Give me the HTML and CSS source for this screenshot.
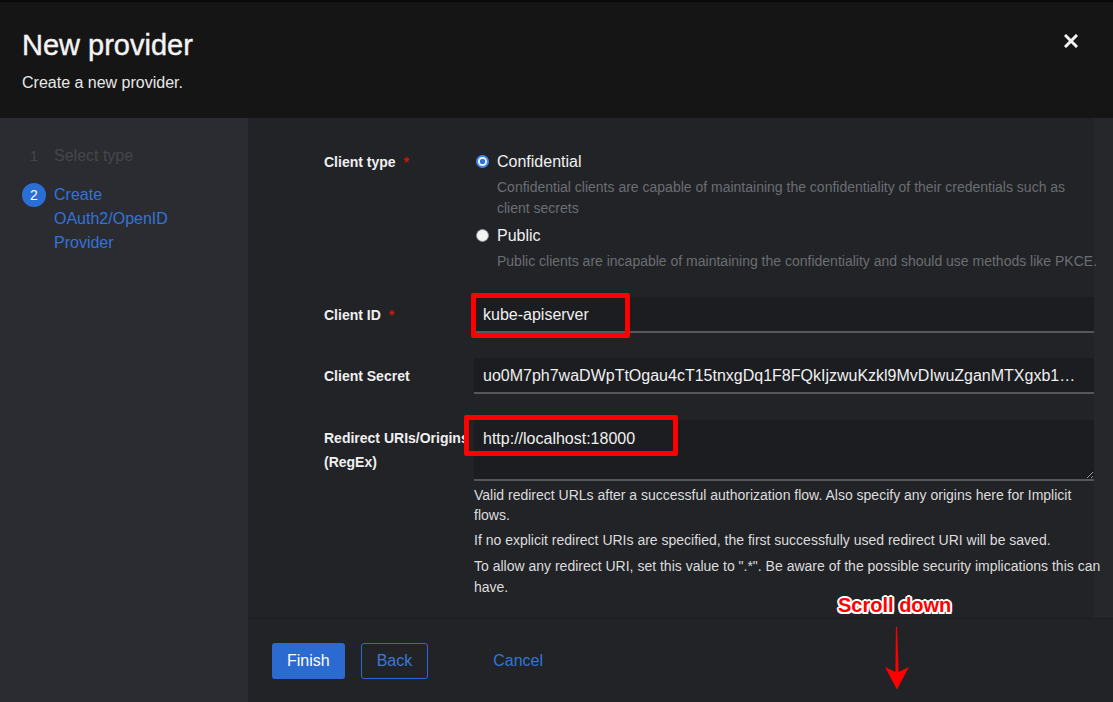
FILE: index.html
```html
<!DOCTYPE html>
<html lang="en">
<head>
<meta charset="utf-8">
<title>New provider</title>
<link rel="stylesheet" href="styles.css">
</head>
<body>
<div class="modal">
  <header class="modal-header">
    <div class="titles">
      <h1 class="title">New provider</h1>
      <p class="subtitle">Create a new provider.</p>
    </div>
    <button class="close" type="button" aria-label="Close">
      <svg viewBox="0 0 14 14" width="14" height="14"><path d="M2 2 L12 12 M12 2 L2 12" stroke="#f2f2f2" stroke-width="3" stroke-linecap="square" fill="none"/></svg>
    </button>
  </header>
  <div class="wizard">
    <nav class="wizard-nav">
      <ol class="steps">
        <li class="step"><span class="step-num">1</span><span class="step-text">Select type</span></li>
        <li class="step current"><span class="step-num">2</span><span class="step-text">Create OAuth2/OpenID Provider</span></li>
      </ol>
    </nav>
    <div class="wizard-main">
      <div class="wizard-body">
        <form class="form">
          <div class="group group-radio">
            <div class="label">Client type<span class="req">*</span></div>
            <div class="radio-list">
              <div class="radio">
                <span class="radio-ctl checked"></span>
                <span class="radio-label">Confidential</span>
                <span class="radio-desc">Confidential clients are capable of maintaining the confidentiality of their credentials such as client secrets</span>
              </div>
              <div class="radio">
                <span class="radio-ctl"></span>
                <span class="radio-label">Public</span>
                <span class="radio-desc">Public clients are incapable of maintaining the confidentiality and should use methods like PKCE.</span>
              </div>
            </div>
          </div>
          <div class="group group-id">
            <div class="label">Client ID<span class="req">*</span></div>
            <div class="field">
              <input class="input" type="text" value="kube-apiserver">
              <span class="mark mark-id"></span>
            </div>
          </div>
          <div class="group group-secret">
            <div class="label">Client Secret</div>
            <div class="field">
              <input class="input" type="text" value="uo0M7ph7waDWpTtOgau4cT15tnxgDq1F8FQkIjzwuKzkl9MvDIwuZganMTXgxb1NaQ8rTzLw3pVh2sKx">
            </div>
          </div>
          <div class="group group-redirect">
            <div class="label">Redirect URIs/Origins (RegEx)</div>
            <div class="field">
              <textarea class="textarea">http://localhost:18000</textarea>
              <span class="mark mark-redirect"></span>
              <p class="helper first">Valid redirect URLs after a successful authorization flow. Also specify any origins here for Implicit flows.</p>
              <p class="helper">If no explicit redirect URIs are specified, the first successfully used redirect URI will be saved.</p>
              <p class="helper">To allow any redirect URI, set this value to ".*". Be aware of the possible security implications this can have.</p>
            </div>
          </div>
        </form>
      </div>
      <footer class="wizard-footer">
        <button class="btn btn-primary" type="button">Finish</button>
        <button class="btn btn-secondary" type="button">Back</button>
        <button class="btn btn-link" type="button">Cancel</button>
      </footer>
      <div class="scroll-note">Scroll down</div>
      <svg class="scroll-arrow" viewBox="0 0 28 66" width="28" height="66"><polygon points="12.9,2 14.1,2 15.6,47 26,42 14,64.5 2,42 12.4,47" fill="#ff0000"/></svg>
    </div>
  </div>
</div>
</body>
</html>
```

FILE: styles.css
```css
html, body {
  margin: 0;
  height: 100%;
}

body {
  background: #151515;
  color: #f0f0f0;
  font-family: "Liberation Sans", Arial, sans-serif;
  overflow: hidden;
}

.modal {
  height: 702px;
  display: flex;
  flex-direction: column;
}

.modal-header {
  background: #151515;
  border-top: 2px solid #0a0a0a;
  padding: 26px 35px 23px 22px;
  display: flex;
  justify-content: space-between;
  align-items: flex-start;
}

.title {
  margin: 0;
  font-size: 29px;
  line-height: 34px;
  font-weight: 400;
  color: #f4f4f4;
  -webkit-text-stroke: 0.4px #f4f4f4;
}

.subtitle {
  margin: 9px 0 0;
  font-size: 16px;
  line-height: 24px;
  color: #e8e8e8;
}

.close {
  margin-top: 6px;
  width: 14px;
  height: 14px;
  padding: 0;
  border: 0;
  background: none;
  display: block;
}

.close svg {
  display: block;
}

.wizard {
  flex: 1;
  display: flex;
  min-height: 0;
}

.wizard-nav {
  width: 248px;
  flex: none;
  background: #2b2c31;
}

.steps {
  list-style: none;
  margin: 0;
  padding: 26px 50px 0 22px;
  display: flex;
  flex-direction: column;
  gap: 15px;
}

.step {
  display: flex;
  gap: 8px;
  font-size: 16px;
  line-height: 24px;
  color: #45464b;
}

.step-num {
  width: 24px;
  height: 24px;
  flex: none;
  border-radius: 50%;
  text-align: center;
  font-size: 14px;
}

.step.current {
  color: #3373d9;
}

.step.current .step-num {
  background: #2b6fd6;
  color: #ffffff;
}

.wizard-main {
  flex: 1;
  display: flex;
  flex-direction: column;
  position: relative;
  background: #222327;
  min-width: 0;
}

.wizard-body {
  flex: 1;
  overflow: hidden;
  min-height: 0;
  background: linear-gradient(to left, #26272b 19px, #222327 19px);
}

.form {
  padding: 32px 19px 0 76px;
  display: flex;
  flex-direction: column;
  gap: 24px;
}

.group {
  display: grid;
  grid-template-columns: 150px 1fr;
}

.group-id {
  margin-top: 1px;
}

.group-secret {
  margin-top: 1px;
}

.group-redirect {
  margin-top: 2px;
}

.label {
  font-size: 14px;
  font-weight: 700;
  line-height: 24px;
  padding-top: 6px;
  color: #f0f0f0;
}

.group-radio .label {
  padding-top: 0;
}

.req {
  color: #c9190b;
  margin-left: 8px;
}

.radio-list {
  display: flex;
  flex-direction: column;
  gap: 5px;
}

.radio {
  display: grid;
  grid-template-columns: 23px 1fr;
}

.radio-ctl {
  width: 13px;
  height: 13px;
  box-sizing: border-box;
  margin: 5px 0 0 2px;
  border-radius: 50%;
  background: #f4f4f4;
  border: 1px solid #8a8d90;
}

.radio-ctl.checked {
  border: 2px solid #3e8af0;
  background: radial-gradient(circle, #2f72dc 0 2.4px, #eef3fb 3px);
}

.radio-label {
  font-size: 16px;
  line-height: 24px;
  color: #f0f0f0;
}

.radio-desc {
  grid-column: 2;
  font-size: 14px;
  line-height: 21px;
  color: #6a6e73;
  margin: 3px -6px 0 0;
}

.field {
  position: relative;
}

.input {
  display: block;
  width: 100%;
  height: 36px;
  box-sizing: border-box;
  margin: 0;
  padding: 2px 8px 0 9px;
  background: #1b1d21;
  border: 0;
  border-bottom: 2px solid #55575b;
  color: #f0f0f0;
  font: 16px "Liberation Sans", Arial, sans-serif;
  text-overflow: ellipsis;
  outline: none;
}

.textarea {
  display: block;
  width: 100%;
  height: 61px;
  box-sizing: border-box;
  margin: 0;
  padding: 7px 8px 0 9px;
  background: #1b1d21;
  border: 0;
  border-bottom: 2px solid #55575b;
  color: #f0f0f0;
  font: 16px/24px "Liberation Sans", Arial, sans-serif;
  resize: vertical;
  color-scheme: dark;
  outline: none;
}

.mark {
  position: absolute;
  box-sizing: border-box;
  border: 5px solid #ff0000;
  border-radius: 2px;
  pointer-events: none;
}

.mark-id {
  left: -3px;
  top: -4px;
  width: 159px;
  height: 45px;
}

.mark-redirect {
  left: -10px;
  top: -5px;
  width: 214px;
  height: 41px;
}

.helper {
  margin: 5px -13px 0 0;
  font-size: 14px;
  line-height: 21px;
  color: #dcdcdc;
}

.helper.first {
  margin-top: 4px;
  line-height: 20px;
}

.wizard-footer {
  height: 84px;
  box-sizing: border-box;
  border-top: 1px solid #1c1d21;
  padding: 24px;
  display: flex;
  align-items: flex-start;
  gap: 16px;
}

.btn {
  font: 16px/24px "Liberation Sans", Arial, sans-serif;
  padding: 5px 14px;
  border: 1px solid transparent;
  border-radius: 3px;
  background: transparent;
}

.btn-primary {
  background: #2b6ad0;
  color: #ffffff;
}

.btn-secondary {
  padding: 5px 15px;
  border-color: #2b6ad0;
  color: #3a78d8;
}

.btn-link {
  color: #3373d9;
  margin-left: 34px;
}

.scroll-note {
  position: absolute;
  left: 590px;
  top: 475px;
  font-size: 20px;
  line-height: 24px;
  font-weight: 700;
  color: #ff0000;
  text-shadow:
    2px 0 0 #fff, -2px 0 0 #fff, 0 2px 0 #fff, 0 -2px 0 #fff,
    1.5px 1.5px 0 #fff, -1.5px 1.5px 0 #fff, 1.5px -1.5px 0 #fff, -1.5px -1.5px 0 #fff;
  white-space: nowrap;
}

.scroll-arrow {
  position: absolute;
  left: 635px;
  top: 507px;
  display: block;
}
```
